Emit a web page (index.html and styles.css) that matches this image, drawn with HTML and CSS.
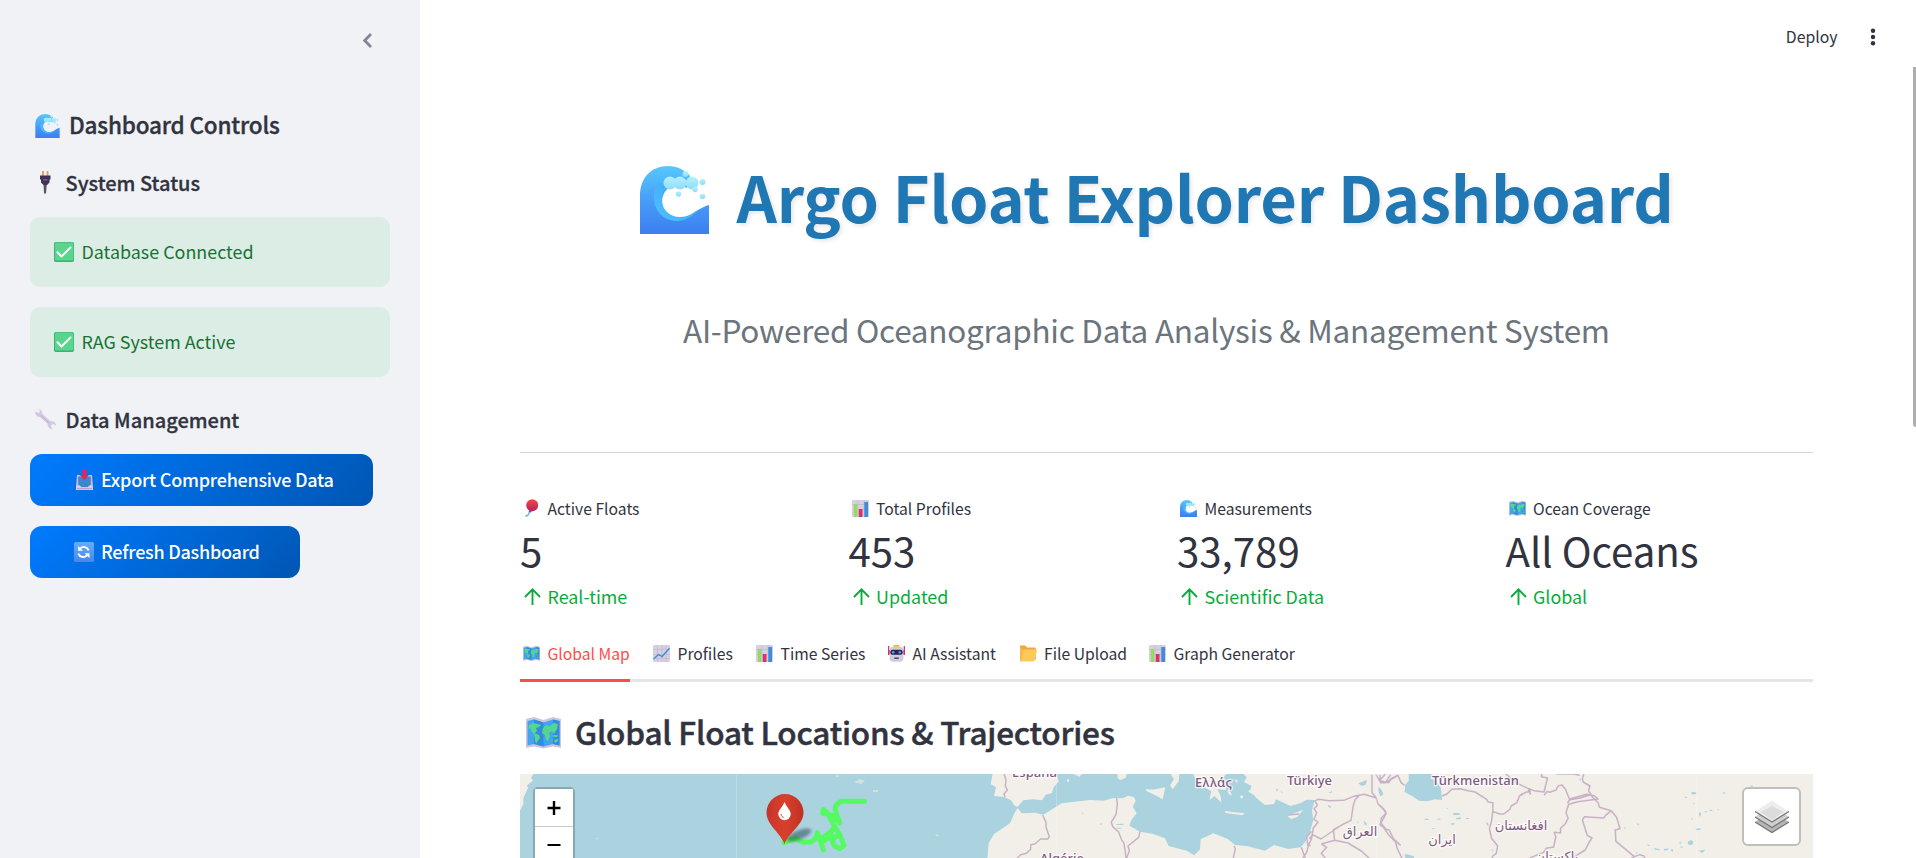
FILE: index.html
```
<!DOCTYPE html>
<html lang="en">
<head>
<meta charset="utf-8">
<title>Argo Float Explorer Dashboard</title>
<link rel="stylesheet" href="styles.css">
</head>
<body>
<svg class="defs" width="0" height="0">
  <defs>
    <linearGradient id="gWave" x1="0" y1="0" x2="0" y2="1"><stop offset="0" stop-color="#58c8fd"/><stop offset=".5" stop-color="#479ef8"/><stop offset="1" stop-color="#3d7df0"/></linearGradient>
    <linearGradient id="gCurl" x1="1" y1="0" x2="0" y2="1"><stop offset="0" stop-color="#7fdcff" stop-opacity="0"/><stop offset=".5" stop-color="#45b0fa"/><stop offset="1" stop-color="#4fc2ff"/></linearGradient>
    <linearGradient id="gFoam" x1="0" y1="0" x2="0" y2="1"><stop offset="0" stop-color="#b5f0ff"/><stop offset="1" stop-color="#8fdcf8"/></linearGradient>
    <linearGradient id="gPin" x1="0" y1="0" x2="1" y2="0"><stop offset="0" stop-color="#c6352a"/><stop offset=".5" stop-color="#d9402c"/><stop offset="1" stop-color="#bf3222"/></linearGradient>
    <linearGradient id="gBall" x1="0" y1="0" x2="0" y2="1"><stop offset="0" stop-color="#f04848"/><stop offset="1" stop-color="#b4245c"/></linearGradient>
    <linearGradient id="gRefresh" x1="0" y1="0" x2="0" y2="1"><stop offset="0" stop-color="#62aefa"/><stop offset="1" stop-color="#4a86e8"/></linearGradient>
    <filter id="soft" x="-30%" y="-50%" width="160%" height="200%"><feGaussianBlur stdDeviation="1.8"/></filter>
  </defs>
  <symbol id="wave" viewBox="0 0 69 68">
    <path d="M0 68V30C0 12 11 0 28 0c9 0 17 4 22 10l-3 12c-14-8-25 2-25 14 0 10 8 16 17 16 14 0 16-9 30-13v29z" fill="url(#gWave)"/>
    <path d="M48 18C30 4 14 16 14 32c0 13 10 23 23 23 10 0 17-6 22-12-5 3-10 8-19 8-10 0-18-7-18-17 0-12 10-20 22-15z" fill="url(#gCurl)"/>
    <g fill="url(#gFoam)"><circle cx="30" cy="17" r="6.5"/><circle cx="40" cy="17" r="6.5"/><circle cx="52" cy="17" r="6.5"/><circle cx="45.500" cy="8" r="3"/><circle cx="62.500" cy="16" r="3"/><circle cx="55" cy="23.500" r="2.700"/><circle cx="38.500" cy="28" r="2.700"/><circle cx="62.500" cy="30.500" r="2.800"/></g>
  </symbol>
  <symbol id="plug" viewBox="0 0 12 23">
    <path d="M3 0h2v5H3zM7.500 0h2v5h-2z" fill="#d9a47a"/>
    <path d="M1 4.500h10.500v4h-1v3L8 14H4.500L2 11.500v-3H1z" fill="#3f3350"/><path d="M4.500 14h3.200l-.7 8.500H5z" fill="#5c5462"/><path d="M4 8h4.500v1.500H4z" fill="#7a4fc0"/>
  </symbol>
  <symbol id="check" viewBox="0 0 20 20">
    <rect width="20" height="20" rx="1.800" fill="#3fae79"/><rect x="1" y=".6" width="18.400" height="17.800" rx="1.200" fill="#57d68c"/>
    <path d="M3.500 10.200l4 4.300 9-9" fill="none" stroke="#fff" stroke-width="2" stroke-linecap="round" stroke-linejoin="round"/>
  </symbol>
  <symbol id="wrench" viewBox="0 0 21 20">
    <path d="M3.500 0L6.500 1.500 7.500 5 15.500 12.200 19 12.500 21 15.500 20.500 16.500 18.200 15 16 16.200 16.500 18.600 18 19.500 15.500 20 13 17.500 12.600 14.800 4.800 7.900 2 7.200 0 4 .5 2.500 3 4 4.800 3.500 4.500 1.500z" fill="#d3c8e2"/>
    <path d="M6 6.500l8 7.500" stroke="#bdb0d2" stroke-width="1"/>
  </symbol>
  <symbol id="inbox" viewBox="0 0 17 20">
    <path d="M1 5h15l1 12.500V20H0V17.500z" fill="#c9bcd8"/><path d="M2.200 6.500h12.600v8l-1.600 2.500H3.800l-1.600-2.500z" fill="#3a87cf"/>
    <path d="M0 15.500h4l1.500 2h6l1.500-2h4V20H0z" fill="#dccde4"/><path d="M1 18.700h15" stroke="#b597c4" stroke-width="1"/>
    <path d="M6.200 0h4.300v5h2.400L8.400 10 3.800 5h2.400z" fill="#dc2859"/>
  </symbol>
  <symbol id="refresh" viewBox="0 0 20 20">
    <rect width="20" height="20" rx="1.500" fill="url(#gRefresh)"/>
    <g fill="none" stroke="#fff" stroke-width="2"><path d="M6 6.600c2.800-2.700 7.200-1.800 8.700 1.800"/><path d="M13 13.400c-2.800 2.700-7.200 1.800-8.700-1.800"/></g>
    <path d="M4 4v4.800h5zM15.500 16v-4.800h-5z" fill="#fff"/>
  </symbol>
  <symbol id="balloon" viewBox="0 0 13 18">
    <path d="M5 12C3 13 5 14 3.500 15.500S1.500 17 .5 17.300" fill="none" stroke="#62a8ee" stroke-width="1.400"/>
    <circle cx="7.200" cy="6.200" r="6" fill="url(#gBall)"/><path d="M3.600 11.500l3.500.2-1.600 2z" fill="#9c2468"/>
  </symbol>
  <symbol id="bars" viewBox="0 0 17 17">
    <rect width="17" height="17" rx=".8" fill="#d8d0e2"/><path d="M0 4.500h17M0 9.500h17M6 0v17M12 0v17" stroke="#bcb2cb" stroke-width=".6"/>
    <path d="M1.800 4h3.500v13H1.800z" fill="#93db62"/><path d="M6.800 9h3.700v8H6.800z" fill="#dc3268"/><path d="M12.300 2H16v15h-3.700z" fill="#3b8de0"/>
  </symbol>
  <symbol id="line" viewBox="0 0 17 17">
    <rect width="17" height="17" rx=".8" fill="#d8d0e2"/><path d="M0 4.500h17M0 9.500h17M0 13.500h17M4.500 0v17M9 0v17M13 0v17" stroke="#bfb4cd" stroke-width=".6"/>
    <path d="M.5 14l5-4.500 3.500 2 7.500-8.200" fill="none" stroke="#3a8fd8" stroke-width="1.400"/>
  </symbol>
  <symbol id="robot" viewBox="0 0 17 17">
    <path d="M5.500 0h6v3h-6z" fill="#f5b931"/><path d="M0 1h1.300v9H0zM15.700 1H17v9h-1.300z" fill="#d63a6b"/><path d="M0 5h2v4.500H0zM15 5h2v4.500h-2z" fill="#c93066"/>
    <rect x="1.600" y="1.800" width="13.800" height="15" rx="3.500" fill="#d4cae0"/>
    <rect x="2.300" y="4.800" width="12.400" height="5" rx="2.200" fill="#2b2650"/><circle cx="5.200" cy="7.200" r="1.300" fill="#3aa8f2"/><circle cx="11.800" cy="7.200" r="1.300" fill="#3aa8f2"/>
    <path d="M6.300 12.500h4.400v1.400H6.300z" fill="#443a60"/>
  </symbol>
  <symbol id="folder" viewBox="0 0 17 16">
    <path d="M0 1.200C0 .5.500 0 1.200 0h4l2 2h7.500c.6 0 1.100.5 1.100 1.100V14H0z" fill="#f0a83a"/>
    <path d="M3.500 4h12.600c.7 0 1 .5.800 1.200L14.500 15c-.1.600-.6 1-1.200 1H.8z" fill="#fdc95a"/><path d="M0 2l4 2-3.200 12H0z" fill="#f9b848"/>
  </symbol>
  <symbol id="map" viewBox="0 0 35 32">
    <path d="M0 2l8-2 9.500 3L27 0l8 2v29l-8-1.500-9.500 2L8 29.500 0 31z" fill="#d0c3dd"/>
    <path d="M1.500 4L8 2.500l9.500 3L27 2.500 33.500 4v24.500L27 27l-9.500 2.500L8 27l-6.500 1.500z" fill="#41a3f2"/>
    <path d="M8 2.500l9.500 3v24L8 27zM27 2.500L33.500 4v24.500L27 27z" fill="#338be0"/>
    <g fill="#55d68f"><path d="M3 8l4-2 5 1 3 1-2 2-3 1 1 3-3 3-2-2-2-4-2 1z"/><path d="M8 16l5 2 1 3-3 4-1 2-1-4z"/><path d="M17 11l3-3 4 1 4-3 4 1-1 5-2 3-1 2-2-3-3 2 1 3-2 5-2-1-1-5-3-2z"/><path d="M27.500 18h4v2h-4zM28 23l4-1v2l-3 2z"/></g>
  </symbol>
  <symbol id="arrow" viewBox="0 0 17 17"><path d="M8.500 17V1.500M1 9l7.500-7.600L16 9" fill="none" stroke="#09ab3b" stroke-width="1.900"/></symbol>
</svg>

<div class="app">
  <aside class="sidebar">
    <div class="collapse"><svg width="9" height="15" viewBox="0 0 9 15"><path d="M8 1L1.700 7.500 8 14" fill="none" stroke="#808495" stroke-width="2.700"/></svg></div>
    <h2 class="side-title"><svg class="i-wave"><use href="#wave"/></svg><span>Dashboard Controls</span></h2>
    <h3 class="side-sub status"><span class="slot"><svg class="i-plug"><use href="#plug"/></svg></span><span>System Status</span></h3>
    <div class="alert"><svg class="i-sq"><use href="#check"/></svg><span>Database Connected</span></div>
    <div class="alert"><svg class="i-sq"><use href="#check"/></svg><span>RAG System Active</span></div>
    <h3 class="side-sub data"><span class="slot"><svg class="i-wrench"><use href="#wrench"/></svg></span><span>Data Management</span></h3>
    <button class="btn export"><span class="slot"><svg class="i-inbox"><use href="#inbox"/></svg></span><span>Export Comprehensive Data</span></button>
    <button class="btn refresh"><span class="slot"><svg class="i-sq"><use href="#refresh"/></svg></span><span>Refresh Dashboard</span></button>
  </aside>

  <main class="main">
    <header class="toolbar"><span>Deploy</span><svg width="6" height="18" viewBox="0 0 6 18"><g fill="#31333f"><circle cx="3" cy="2.700" r="2.200"/><circle cx="3" cy="9" r="2.200"/><circle cx="3" cy="15.300" r="2.200"/></g></svg></header>
    <div class="content">
      <h1 class="title"><svg class="i-hero"><use href="#wave"/></svg><span>Argo Float Explorer Dashboard</span></h1>
      <p class="subtitle">AI-Powered Oceanographic Data Analysis &amp; Management System</p>
      <hr>
      <section class="metrics">
        <div class="metric"><div class="label"><span class="slot"><svg class="i-balloon"><use href="#balloon"/></svg></span><span>Active Floats</span></div><div class="value">5</div><div class="delta"><svg><use href="#arrow"/></svg><span>Real-time</span></div></div>
        <div class="metric"><div class="label"><span class="slot"><svg class="i-17"><use href="#bars"/></svg></span><span>Total Profiles</span></div><div class="value">453</div><div class="delta"><svg><use href="#arrow"/></svg><span>Updated</span></div></div>
        <div class="metric"><div class="label"><span class="slot"><svg class="i-17"><use href="#wave"/></svg></span><span>Measurements</span></div><div class="value">33,789</div><div class="delta"><svg><use href="#arrow"/></svg><span>Scientific Data</span></div></div>
        <div class="metric"><div class="label"><span class="slot"><svg class="i-17"><use href="#map"/></svg></span><span>Ocean Coverage</span></div><div class="value">All Oceans</div><div class="delta"><svg><use href="#arrow"/></svg><span>Global</span></div></div>
      </section>
      <nav class="tabs">
        <a class="tab active t1"><span class="slot"><svg class="i-17"><use href="#map"/></svg></span><span>Global Map</span></a>
        <a class="tab t2"><span class="slot"><svg class="i-17"><use href="#line"/></svg></span><span>Profiles</span></a>
        <a class="tab t3"><span class="slot"><svg class="i-17"><use href="#bars"/></svg></span><span>Time Series</span></a>
        <a class="tab t4"><span class="slot"><svg class="i-17"><use href="#robot"/></svg></span><span>AI Assistant</span></a>
        <a class="tab t5"><span class="slot"><svg class="i-17"><use href="#folder"/></svg></span><span>File Upload</span></a>
        <a class="tab t6"><span class="slot"><svg class="i-17"><use href="#bars"/></svg></span><span>Graph Generator</span></a>
      </nav>
      <h2 class="heading"><svg class="i-map"><use href="#map"/></svg><span>Global Float Locations &amp; Trajectories</span></h2>
      <div class="map">
        <svg class="map-canvas" width="1293" height="84" viewBox="0 0 1293 84">
          <rect width="1293" height="84" fill="#f2efe9"/>
          <!-- Atlantic and Mediterranean -->
          <g transform="translate(460 -14) scale(.33333)">
            <path fill="#aad3df" d="M-1380 42H38L32 72 48 82 42 108 72 111 92 120 104 137 113 140 130 121 160 118 186 121 197 104 216 99 221 82 236 64 228 42H572L582 58 570 76 578 88 596 64 598 42H640L648 60 674 82 694 94 688 120 704 108 724 128 722 108 712 88 740 90 730 74 720 60 740 42H790L800 52 792 66 815 78 805 95 822 105 830 115 855 135 882 132 888 118 932 138 960 130 980 119 1005 120 996 150 1000 180 990 215 976 245 962 262 925 267 882 255 855 272 800 258 765 255 742 236 700 220 662 238 660 268 643 286 620 272 566 258 555 235 520 222 480 215 448 197 454 180 470 160 458 140 467 122 462 112 445 107 428 115 400 114 370 122 330 120 245 130 190 164 165 158 125 160 113 144 103 160 90 190 42 222 26 250 22 300H-1380z"/>
            <g fill="#f2efe9"><path d="M498 87l20 2 38-7-8 36-22-12-27-13zM735 152l22 4 38 4-8 6-50-7zM922 168l20-8 28-10-18 20-18 8zM412 42l28-1-2 12-18 7-7-6zM280 42h26l-8 8zM260 60l6-4 2 6-4 5zM742 92l10 3 3 12-8-4zM780 108l8-2 1 8-6 2zM764 58l10 4-4 8z"/><path d="M-1308 42h-72v110l10-20v-18l14-30-3-8 18-14-6-8 8-12z"/></g>
            <g fill="#aad3df"><path d="M1135 70l10-4 16-6-4 14-12 4zM1195 80l10 10 3 14-6 5-6-12zM1152 182l8 8-1 8-6-6zM408 192l22-1 1 4h-20zM409 204l10-1 8 3h-16zM360 190l6 1-2 5-4-3zM888 86l6 2-3 8zM1044 134l10 6-3 4-6-4zM902 90l6 8-3 1zM1130 184l7 2-4 3zM306 158l5 2-4 3zM1046 98l10-4 1 3-8 3z"/><path d="M794 50l5 3-3 5zM806 86l8-2-4 8z"/></g>
            <g fill="none" stroke="#c9b2c6" stroke-width="4.500" stroke-linejoin="round">
              <path d="M72 42l6 18-2 18 6 12-10 12 3 10M188 165l10 22 0 15 10 28-4 7-22 0-18 15-12 2 0 14-12 12-18 4-12 12M410 114l2 20-4 30-14 22 4 14 18 16 8 22 8 12 4 26 2 18M480 214l-4 18-32 26 4 14-8 22M762 258l4 8-6 28M1005 122l10-4 32 4 44-1 30-12 32-6 34 10M1137 107l-12 12-6 22-6 40-28 14-62 42-25-13-10 12M1005 122l7 14-10 10 8 12-8 20 12 8-14 18-6 35-8 14-6 24-12 18M964 262l12 34M994 214l-14 18 4 26 8-2M998 228l-8 8M1176 44l0 54 12 14 6 20 18 16 6 12-14 14-2 14 16 20 10 2 12 26 22 20M1024 252l40-11-4-32 28-15M1064 241l40 8 40 24 24 22M1024 252l16 10-16 18 12 14M1188 44l14 24 16 0 32-20M1200 44l0 20 16 4 16-24M925 165l32-3"/>
            </g>
          </g>
          <!-- Caspian Sea, Iran and Central Asia -->
          <g transform="translate(860 -14) scale(.3419 .33333)">
            <path fill="#aad3df" d="M84 42h70l-4 14 14 6 14 22 4 36-22-2-22 6-24-2-20-14-22-12 2-22 10-12z"/>
            <g fill="#aad3df"><path d="M214 159h18l2 6h-20zM130 176h11l1 4h-10zM168 176h9v3h-9zM208 190l10-2-2 6h-8zM222 174l14-2v6h-12zM152 204h8v2h-8zM252 174h9v3h-9zM191 143l7 1v3zM310 186l6 4 2 8-5-2zM326 268l7 2-4 4zM0 92l9 6-2 8-7 2zM72 282l12 2 14 4 2 6H74zM412 98l7 4-4 5zM582 55l7 4-4 4zM910 96l14 1 2 4-12 3zM890 110l11 1-8 3zM1002 94l8 6-4 3zM1082 76l10 1-4 5zM914 128l6 2-1 4zM932 157l8 2-4 12-3-6zM950 153l9 2-9 3zM964 149l8 1v3h-8zM986 146l7 4-4 1zM908 176l8-1-2 4zM750 190l9 2-4 4zM714 202l6 1-4 4zM922 206l16-1v4l-12 2zM780 252l10 4-4 3zM802 264l14 3 2 4-14-2zM830 267l14-2-2 5-10 2zM852 266l5 2-1 8-4-3zM874 248l9-3-4 7zM876 260h10l-2 5zM900 246l8-6 8 4-1 8-8 4-6-4zM932 272l20-3-10 10zM748 276l6 1-3 4z"/></g>
            <g fill="none" stroke="#c9b2c6" stroke-width="4.500" stroke-linejoin="round">
              <path d="M0 62l26 6 6-12 20-10 10 22 10 8M0 60l16-18M182 108l14-6 14-14 24-2 24 6 20 4 34 22 4 8 14 2v26l20 8 12 0 18-14 4-10 16-10 8-20 20-12 6 0 2-10 14 6 30 4 4-18 6-24-18-4 4-20h90M440 102l-2-14-40-20-30-26M440 96l-2 8M480 106l10-12 6 3 18-6 8-14 10-2 10 12 12 30 50-14 22 4 12 10-60 8-26 8-8 24 6 18-8 16-14 14 0 14-18-2 4 14-6 30-22 4-8 12-38 16-2 24M548 130l6-10 30-6 32-10M596 42l-4 14 2 10 20 12-4 14 10 18 18 18 4 14 34 10-16 14-6 8-56-4-6 10 14 46 14 8-10 16-10 20-34 22M676 152l16 20 10 34-14 4 2 34 54 46 16-6 12 4 4 8M744 290l-14 8M516 42h50l18 4M330 154l-4 30-6 22 6 28 18 24-4 22-10 8-2 6M0 136l14 16 4 8-18 34 12 10 14 22 20 20 4 18 14 30"/>
            </g>
          </g>
          <path d="M216.500 0v84M536.500 0v84M856.500 0v84M1176.500 0v84" stroke="#fff" stroke-opacity=".2"/>
          <g fill="#cfe2e0"><path d="M334 8l6-3 5 2-4 3zM353 16h5v2h-5zM415 60l4 1-2 2zM316 1h3v2h-3zM76 64h2v1h-2z"/></g>
          <g class="place">
            <text x="492" y="3" textLength="45">España</text><text x="675" y="12.500" textLength="37">Ελλάς</text><text x="767" y="10.500" textLength="45">Türkiye</text><text x="912" y="11" textLength="87">Türkmenistan</text><text x="520" y="89" textLength="44">Algérie</text>
            <text class="ar" x="840" y="62" text-anchor="middle">العراق</text><text class="ar" x="922" y="70" text-anchor="middle">ایران</text><text class="ar" x="1001" y="56" text-anchor="middle">افغانستان</text><text class="ar" x="1037" y="87" text-anchor="middle">پاکستان</text>
          </g>
          <!-- Float trajectory -->
          <g transform="translate(220 0) scale(.33333)" fill="none" stroke="#55fa62" stroke-width="15" stroke-linecap="round" stroke-linejoin="round">
            <path d="M132 206L165 193 190 205 212 204 228 192 232 176 240 198 250 228 240 196 270 176 285 158 262 118 250 106 248 118 276 124 299 146 290 122 285 105 288 93 303 82H373M232 192L262 190 285 160 298 180 312 214 300 224 284 216 276 200 292 184M246 204L276 184"/>
          </g>
          <ellipse cx="279" cy="61" rx="13" ry="4.500" transform="rotate(-22 279 61)" fill="#24414b" opacity=".5" filter="url(#soft)"/>
          <path d="M264.500 70C260 58 246.500 51 246.500 38.500a18.500 18.500 0 0 1 37 0C283.500 51 269 58 264.500 70z" fill="url(#gPin)"/>
          <path d="M264.500 28c2 5 6.200 8 6.200 12a6.200 6.200 0 0 1-12.400 0c0-4 4.200-7 6.200-12z" fill="#fff"/><path d="M261 40c.2 2 1 3 2.700 3.300" stroke="#d33d2a" fill="none"/>
        </svg>
        <div class="zoom"><span><svg width="16" height="16"><path d="M8 1v14M1.500 8h13" stroke="#000" stroke-width="2.400"/></svg></span><span><svg width="16" height="16"><path d="M1.500 8h13" stroke="#000" stroke-width="2"/></svg></span></div>
        <div class="layers"><svg width="34" height="34" viewBox="0 0 34 34"><path d="M0 22L17 11l17 11-17 11z" fill="#b5b5b5"/><path d="M0 22l17 10.500L34 22" fill="none" stroke="#777" stroke-width="1.200"/><path d="M0 17L17 6l17 11-17 11z" fill="#cfcfcf"/><path d="M0 17l17 10.500L34 17" fill="none" stroke="#777" stroke-width="1.200"/><path d="M0 11.500l17-11 17 11-17 11z" fill="#ededed"/><path d="M5.500 12L17 6l11.500 6L17 20z" fill="#dcdcdc"/><path d="M0 11.500l17 10.500 17-10.500" fill="none" stroke="#777" stroke-width="1.200"/></svg></div>
      </div>
    </div>
    <div class="scrollbar"></div>
  </main>
</div>
</body>
</html>
```
FILE: styles.css
```
* { box-sizing: border-box; }
body { margin: 0; overflow: hidden; font-family: "Noto Sans CJK SC", "Noto Sans", sans-serif; font-size: 18px; color: #31333f; background: #fff; }
h1, h2, h3, p { margin: 0; }
svg { display: block; flex: none; }
span { white-space: nowrap; }
.defs { position: absolute; }
.app { display: flex; height: 858px; overflow: hidden; }
.slot { display: flex; align-items: center; justify-content: center; flex: none; }

.sidebar { width: 420px; flex: none; padding: 0 30px; background: #f0f2f6; }
.collapse { height: 101px; padding: 33px 18px 0 0; display: flex; justify-content: flex-end; }
.side-title { height: 46px; display: flex; align-items: center; padding-left: 5px; gap: 9px; font-size: 22.5px; font-weight: 500; letter-spacing: -.18px; -webkit-text-stroke: .35px #31333f; }
.side-title svg { margin-top: 3px; }
.side-sub { height: 44px; display: flex; align-items: center; gap: 9.5px; padding-left: 5px; font-size: 20px; font-weight: 500; -webkit-text-stroke: .3px #31333f; }
.side-sub .slot { width: 21px; }
.status { margin: 13px 0; }
.status .slot { padding-right: 2px; }
.data { margin-bottom: 13px; }
.alert { height: 70px; margin-bottom: 20px; padding-left: 24px; border-radius: 10px; background: #dcede6; color: #177233; display: flex; align-items: center; gap: 7.5px; font-size: 17.9px; }
.alert span { padding-bottom: 2px; }
.btn { display: flex; align-items: center; gap: 7px; height: 52px; margin: 0 0 20px; padding: 0 0 0 44px; border: 0; border-radius: 12px; background: linear-gradient(135deg, #007bff, #0056b3); color: #fff; font: 500 18px "Noto Sans CJK SC", sans-serif; letter-spacing: -.25px; }
.btn span + span { padding-bottom: 2px; }
.btn .slot { width: 20px; }
.export { width: 343px; }
.refresh { width: 270px; }

.main { flex: 1; min-width: 0; position: relative; }
.toolbar { height: 75px; padding: 0 40.5px 2px 0; display: flex; align-items: center; justify-content: flex-end; gap: 32px; font-size: 15.8px; }
.content { width: 1293px; margin-left: 100px; }
.title { height: 100px; margin-top: 71px; display: flex; align-items: center; padding-left: 120px; gap: 27.5px; color: #1f77b4; font-size: 63px; font-weight: 700; line-height: 100px; letter-spacing: -.2px; text-shadow: 2px 2px 4px rgba(0, 0, 0, .1); }
.subtitle { margin-top: 58px; padding-left: 163px; height: 50px; line-height: 50px; font-size: 31.5px; letter-spacing: -.26px; color: #6c757d; white-space: nowrap; }
hr { height: 1px; margin: 98px 0 0; border: 0; background: #d6d6d9; }
.metrics { display: grid; grid-template-columns: repeat(4, 308.500px); gap: 20px; margin-top: 41px; }
.label { height: 28px; display: flex; align-items: center; gap: 5px; padding-left: .5px; font-size: 15.7px; }
.label .slot, .tab .slot { width: 22px; }
.value { height: 54px; line-height: 55px; font-size: 40.200px; }
.delta { height: 40px; display: flex; align-items: center; gap: 6.500px; padding-left: 4px; color: #09ab3b; font-size: 17.900px; }
.delta svg { width: 17px; height: 17px; }
.tabs { display: flex; height: 55px; margin-top: 11px; border-bottom: 3px solid #e6e6e8; font-size: 15.700px; }
.tab { display: flex; align-items: center; height: 55px; padding: 0 0 3px .5px; gap: 5px; }
.active { color: #ff4b4b; border-bottom: 3px solid #ff4b4b; padding-bottom: 0; }
.t1 { width: 110px; margin-right: 20px; }
.t2 { width: 103px; }
.t3 { width: 132px; }
.t4 { width: 131.500px; }
.t5 { width: 129.500px; }
.heading { height: 60px; margin: 19px 0 13px; display: flex; align-items: center; gap: 14px; padding-left: 6px; font-size: 31.500px; font-weight: 500; letter-spacing: -.2px; -webkit-text-stroke: .5px #31333f; }
.heading svg { margin-top: 3px; }

.map { position: relative; height: 84px; overflow: hidden; }
.place { font: 500 13px "Noto Sans", "DejaVu Sans", sans-serif; fill: #80587f; stroke: #fff; stroke-opacity: .75; stroke-width: 2.500px; paint-order: stroke; }
.ar { font-family: "DejaVu Sans", sans-serif; font-size: 13px; }
.zoom { position: absolute; left: 13px; top: 13px; width: 42px; border: 2.500px solid rgba(0, 0, 0, .2); border-radius: 5px; background-clip: padding-box; }
.zoom span { height: 37px; display: flex; align-items: center; justify-content: center; background: #fff; }
.zoom span + span { border-top: 1px solid #ccc; }
.layers { position: absolute; left: 1222px; top: 13px; width: 59px; height: 59px; border: 2px solid rgba(0, 0, 0, .2); border-radius: 6px; background: #fff; background-clip: padding-box; display: flex; align-items: center; justify-content: center; }
.scrollbar { position: absolute; right: 0; top: 67px; width: 3px; height: 360px; border-radius: 0 0 0 3px; background: #aeaeb3; }

.i-wave { width: 25px; height: 24px; }
.i-plug { width: 12px; height: 23px; }
.i-sq { width: 20px; height: 20px; }
.i-wrench { width: 21px; height: 20px; }
.i-inbox { width: 17px; height: 20px; }
.i-balloon { width: 13px; height: 18px; }
.i-17 { width: 17px; height: 17px; }
.i-hero { width: 69px; height: 68px; margin-top: 8px; }
.i-map { width: 35px; height: 32px; }
```
